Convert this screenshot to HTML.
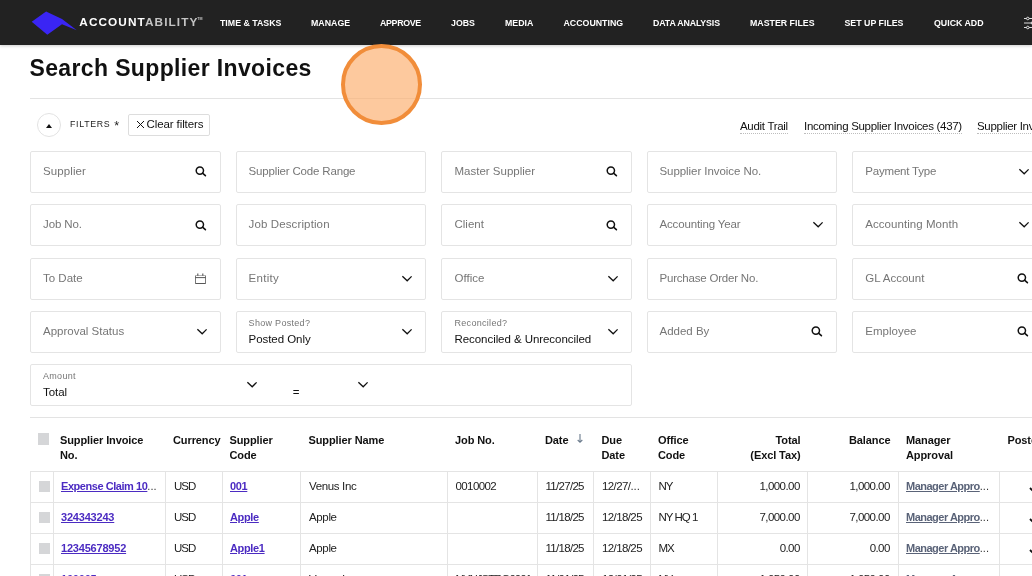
<!DOCTYPE html>
<html>
<head>
<meta charset="utf-8">
<title>Search Supplier Invoices</title>
<style>
*{box-sizing:border-box;margin:0;padding:0}
html,body{width:1032px;height:576px;overflow:hidden;background:#fff}
body{font-family:"Liberation Sans",sans-serif;color:#111;position:relative;font-size:12px}
.abs{position:absolute;white-space:nowrap}
#wrap{position:absolute;left:0;top:0;width:1032px;height:576px;overflow:hidden;will-change:transform}
#nav{position:absolute;left:0;top:0;width:1032px;height:45px;background:#222;box-shadow:0 1px 3px rgba(0,0,0,.2)}
#nav .mi{position:absolute;top:.6px;height:45px;line-height:45px;color:#fff;font-weight:bold;font-size:8.8px;white-space:nowrap}
#brand{position:absolute;left:79.3px;top:.3px;height:45px;line-height:45px;font-weight:bold;font-size:11.8px;letter-spacing:1.08px;color:#fff;white-space:nowrap}
#brand span{color:#c4c4c4}
#tm{position:absolute;left:197.3px;top:17px;font-size:3.6px;line-height:4px;font-weight:bold;color:#c4c4c4}
#title{position:absolute;left:29.5px;top:52px;font-size:23px;letter-spacing:.36px;font-weight:bold;color:#111;line-height:32px;white-space:nowrap}
.hr{position:absolute;left:30px;right:0;height:1px;background:#e3e3e3}
#hl{position:absolute;left:341.2px;top:43.8px;width:81.3px;height:81.3px;border-radius:50%;background:rgba(252,176,112,.68);border:4px solid #f18d3a}
#tog{position:absolute;left:37px;top:113px;width:24px;height:24px;border:1px solid #e2e2e2;border-radius:50%}
#tog:after{content:"";position:absolute;left:7.7px;top:9.5px;border-left:3px solid transparent;border-right:3px solid transparent;border-bottom:4px solid #111}
#flt{position:absolute;left:70px;top:118px;font-size:8.8px;letter-spacing:.7px;word-spacing:1.5px;color:#222;line-height:12px}
#clr{position:absolute;left:128px;top:114px;width:82px;height:22px;border:1px solid #ddd;border-radius:2px;font-size:11.5px;letter-spacing:-.2px;line-height:19.5px;color:#111;white-space:nowrap}
.lnk{position:absolute;top:119px;font-size:11.5px;letter-spacing:-.3px;line-height:14px;color:#111;white-space:nowrap;border-bottom:1px dotted #bdbdbd}
.fb{position:absolute;border:1px solid #e4e4e4;border-radius:2px;background:#fff}
.ph{position:absolute;line-height:14px;font-size:11.5px;letter-spacing:0;color:#767676;white-space:nowrap}
.lb{position:absolute;line-height:10px;font-size:9px;letter-spacing:.3px;color:#767676;white-space:nowrap}
.vl{position:absolute;line-height:14px;font-size:11.5px;letter-spacing:-.06px;color:#111;white-space:nowrap}
svg{position:absolute;overflow:visible}
.th{position:absolute;font-weight:bold;font-size:11px;letter-spacing:-.1px;line-height:15px;color:#111;white-space:nowrap}
.v{position:absolute;width:1px;background:#e4e4e4}
.h{position:absolute;height:1px;background:#e4e4e4;left:30px;right:0}
.td{position:absolute;font-size:11.5px;letter-spacing:-.25px;line-height:14px;color:#222;white-space:nowrap}
.a{color:#4b2bc2;font-weight:bold;text-decoration:underline;font-size:11px;letter-spacing:-.2px}
.m{color:#5a6378;font-weight:bold;text-decoration:underline;font-size:11px;letter-spacing:-.2px}
.el{font-weight:normal;letter-spacing:0;display:inline-block;text-decoration:none;color:#333}
.cb{position:absolute;width:11px;height:11px;background:#d5d6d8}
</style>
</head>
<body><div id="wrap">
<div id="nav">
<svg style="left:0;top:0" width="110" height="45" viewBox="0 0 110 45"><polygon points="31.7,21.8 46.1,11.6 62,19.1 76.8,30.2 62,24.3 47.3,34.7" fill="#3a25f4"/></svg>
<div id="brand">ACCOUNT<span>ABILITY</span></div><div id="tm">TM</div>
<div class="mi" style="left:220px">TIME &amp; TASKS</div>
<div class="mi" style="left:311px">MANAGE</div>
<div class="mi" style="left:380px"><span style="letter-spacing:-.3px">APPROVE</span></div>
<div class="mi" style="left:451px">JOBS</div>
<div class="mi" style="left:505px">MEDIA</div>
<div class="mi" style="left:563.5px">ACCOUNTING</div>
<div class="mi" style="left:653px"><span style="letter-spacing:-.13px">DATA ANALYSIS</span></div>
<div class="mi" style="left:750px">MASTER FILES</div>
<div class="mi" style="left:844.5px">SET UP FILES</div>
<div class="mi" style="left:934px">QUICK ADD</div>
<svg style="left:1024px;top:16px" width="14" height="14" viewBox="0 0 14 14" fill="none" stroke="#ddd" stroke-width="1"><path d="M0 2.5h11M0 7h11M0 11.5h11"/><circle cx="3.8" cy="2.5" r="1.3" fill="#222"/><circle cx="8.5" cy="7" r="1.3" fill="#222"/><circle cx="3.8" cy="11.5" r="1.3" fill="#222"/></svg>
</div>
<div id="title">Search Supplier Invoices</div>
<div class="hr" style="top:98px"></div>
<div id="tog"></div>
<div id="flt">FILTERS</div><div class="abs" style="left:114.3px;top:118.6px;font-size:12.5px;line-height:14px;color:#222">*</div>
<div id="clr"><svg style="left:7.5px;top:5.7px" width="7" height="7" viewBox="0 0 7 7" stroke="#111" stroke-width="1"><path d="M0 0L7 7M7 0L0 7"/></svg><span style="position:absolute;left:17.5px;letter-spacing:-.1px">Clear filters</span></div>
<div class="lnk" style="left:740px">Audit Trail</div>
<div class="lnk" style="left:804px">Incoming Supplier Invoices (437)</div>
<div class="lnk" style="left:977px">Supplier Invoices</div>
<div class="fb" style="left:30px;top:151px;width:191px;height:42px"></div>
<div class="ph" style="left:43px;top:164.2px;letter-spacing:0.1px">Supplier</div>
<svg style="left:193.95px;top:165.3px" width="13" height="13" viewBox="0 0 13 13" fill="none" stroke="#111" stroke-width="1.5"><circle cx="5.85" cy="5.6" r="3.65"/><path d="M8.5 8.2L11.4 10.7" stroke-linecap="round" stroke-width="1.6"/></svg>
<div class="fb" style="left:236px;top:151px;width:190px;height:42px"></div>
<div class="ph" style="left:248.6px;top:164.2px;letter-spacing:-0.17px">Supplier Code Range</div>
<div class="fb" style="left:441px;top:151px;width:191px;height:42px"></div>
<div class="ph" style="left:454.5px;top:164.2px">Master Supplier</div>
<svg style="left:604.55px;top:165.3px" width="13" height="13" viewBox="0 0 13 13" fill="none" stroke="#111" stroke-width="1.5"><circle cx="5.85" cy="5.6" r="3.65"/><path d="M8.5 8.2L11.4 10.7" stroke-linecap="round" stroke-width="1.6"/></svg>
<div class="fb" style="left:647px;top:151px;width:190px;height:42px"></div>
<div class="ph" style="left:659.5px;top:164.2px;letter-spacing:-0.06px">Supplier Invoice No.</div>
<div class="fb" style="left:852px;top:151px;width:191px;height:42px"></div>
<div class="ph" style="left:865.3px;top:164.2px;letter-spacing:-0.2px">Payment Type</div>
<svg style="left:1018.6px;top:168.7px" width="11" height="7" viewBox="0 0 11 7" fill="none" stroke="#111" stroke-width="1.3"><path d="M0.4 0.2L5.2 4.75L9.6 0.4"/></svg>
<div class="fb" style="left:30px;top:204px;width:191px;height:42px"></div>
<div class="ph" style="left:43px;top:217.2px;letter-spacing:-0.1px">Job No.</div>
<svg style="left:193.95px;top:219px" width="13" height="13" viewBox="0 0 13 13" fill="none" stroke="#111" stroke-width="1.5"><circle cx="5.85" cy="5.6" r="3.65"/><path d="M8.5 8.2L11.4 10.7" stroke-linecap="round" stroke-width="1.6"/></svg>
<div class="fb" style="left:236px;top:204px;width:190px;height:42px"></div>
<div class="ph" style="left:248.6px;top:217.2px;letter-spacing:0.12px">Job Description</div>
<div class="fb" style="left:441px;top:204px;width:191px;height:42px"></div>
<div class="ph" style="left:454.5px;top:217.2px">Client</div>
<svg style="left:604.55px;top:219px" width="13" height="13" viewBox="0 0 13 13" fill="none" stroke="#111" stroke-width="1.5"><circle cx="5.85" cy="5.6" r="3.65"/><path d="M8.5 8.2L11.4 10.7" stroke-linecap="round" stroke-width="1.6"/></svg>
<div class="fb" style="left:647px;top:204px;width:190px;height:42px"></div>
<div class="ph" style="left:659.5px;top:217.2px;letter-spacing:-0.15px">Accounting Year</div>
<svg style="left:812.9px;top:222px" width="11" height="7" viewBox="0 0 11 7" fill="none" stroke="#111" stroke-width="1.3"><path d="M0.4 0.2L5.2 4.75L9.6 0.4"/></svg>
<div class="fb" style="left:852px;top:204px;width:191px;height:42px"></div>
<div class="ph" style="left:865.3px;top:217.2px;letter-spacing:0.05px">Accounting Month</div>
<svg style="left:1018.6px;top:222px" width="11" height="7" viewBox="0 0 11 7" fill="none" stroke="#111" stroke-width="1.3"><path d="M0.4 0.2L5.2 4.75L9.6 0.4"/></svg>
<div class="fb" style="left:30px;top:258px;width:191px;height:42px"></div>
<div class="ph" style="left:43px;top:271.2px">To Date</div>
<svg style="left:193.7px;top:272.0px" width="13" height="13" viewBox="0 0 13 13" fill="none" stroke="#666" stroke-width="0.9"><path d="M1.5 3.5v8h10v-8" stroke="#6a6a6a"/><path d="M1.5 3.5h10" stroke="#aaa"/><path d="M1.5 11.5h10" stroke="#555"/><path d="M1.5 5.6h10" stroke="#444"/><path d="M3.8 1.6v2.2M8.8 1.6v2.2" stroke="#555" stroke-width="1.1"/></svg>
<div class="fb" style="left:236px;top:258px;width:190px;height:42px"></div>
<div class="ph" style="left:248.6px;top:271.2px;letter-spacing:0.3px">Entity</div>
<svg style="left:402.0px;top:275.5px" width="11" height="7" viewBox="0 0 11 7" fill="none" stroke="#111" stroke-width="1.3"><path d="M0.4 0.2L5.2 4.75L9.6 0.4"/></svg>
<div class="fb" style="left:441px;top:258px;width:191px;height:42px"></div>
<div class="ph" style="left:454.5px;top:271.2px">Office</div>
<svg style="left:607.9px;top:275.5px" width="11" height="7" viewBox="0 0 11 7" fill="none" stroke="#111" stroke-width="1.3"><path d="M0.4 0.2L5.2 4.75L9.6 0.4"/></svg>
<div class="fb" style="left:647px;top:258px;width:190px;height:42px"></div>
<div class="ph" style="left:659.5px;top:271.2px;letter-spacing:-0.2px">Purchase Order No.</div>
<div class="fb" style="left:852px;top:258px;width:191px;height:42px"></div>
<div class="ph" style="left:865.3px;top:271.2px">GL Account</div>
<svg style="left:1015.65px;top:271.8px" width="13" height="13" viewBox="0 0 13 13" fill="none" stroke="#111" stroke-width="1.5"><circle cx="5.85" cy="5.6" r="3.65"/><path d="M8.5 8.2L11.4 10.7" stroke-linecap="round" stroke-width="1.6"/></svg>
<div class="fb" style="left:30px;top:311px;width:191px;height:42px"></div>
<div class="ph" style="left:43px;top:323.8px">Approval Status</div>
<svg style="left:196.9px;top:328.5px" width="11" height="7" viewBox="0 0 11 7" fill="none" stroke="#111" stroke-width="1.3"><path d="M0.4 0.2L5.2 4.75L9.6 0.4"/></svg>
<div class="fb" style="left:236px;top:311px;width:190px;height:42px"></div>
<div class="lb" style="left:248.6px;top:317.8px">Show Posted?</div>
<div class="vl" style="left:248.6px;top:331.5px">Posted Only</div>
<svg style="left:402.0px;top:328.5px" width="11" height="7" viewBox="0 0 11 7" fill="none" stroke="#111" stroke-width="1.3"><path d="M0.4 0.2L5.2 4.75L9.6 0.4"/></svg>
<div class="fb" style="left:441px;top:311px;width:191px;height:42px"></div>
<div class="lb" style="left:454.5px;top:317.8px">Reconciled?</div>
<div class="vl" style="left:454.5px;top:331.5px">Reconciled &amp; Unreconciled</div>
<svg style="left:607.9px;top:328.5px" width="11" height="7" viewBox="0 0 11 7" fill="none" stroke="#111" stroke-width="1.3"><path d="M0.4 0.2L5.2 4.75L9.6 0.4"/></svg>
<div class="fb" style="left:647px;top:311px;width:190px;height:42px"></div>
<div class="ph" style="left:659.5px;top:323.8px">Added By</div>
<svg style="left:810.05px;top:324.5px" width="13" height="13" viewBox="0 0 13 13" fill="none" stroke="#111" stroke-width="1.5"><circle cx="5.85" cy="5.6" r="3.65"/><path d="M8.5 8.2L11.4 10.7" stroke-linecap="round" stroke-width="1.6"/></svg>
<div class="fb" style="left:852px;top:311px;width:191px;height:42px"></div>
<div class="ph" style="left:865.3px;top:323.8px">Employee</div>
<svg style="left:1015.65px;top:324.5px" width="13" height="13" viewBox="0 0 13 13" fill="none" stroke="#111" stroke-width="1.5"><circle cx="5.85" cy="5.6" r="3.65"/><path d="M8.5 8.2L11.4 10.7" stroke-linecap="round" stroke-width="1.6"/></svg>
<div class="fb" style="left:30px;top:364px;width:602px;height:42px"></div>
<div class="lb" style="left:43px;top:371.3px">Amount</div>
<div class="vl" style="left:43px;top:384.5px">Total</div>
<svg style="left:246.9px;top:382.2px" width="11" height="7" viewBox="0 0 11 7" fill="none" stroke="#111" stroke-width="1.3"><path d="M0.4 0.2L5.2 4.75L9.6 0.4"/></svg>
<div class="vl" style="left:292.8px;top:384.5px">=</div>
<svg style="left:357.9px;top:382.2px" width="11" height="7" viewBox="0 0 11 7" fill="none" stroke="#111" stroke-width="1.3"><path d="M0.4 0.2L5.2 4.75L9.6 0.4"/></svg>
<div class="hr" style="top:417px"></div>
<div class="v" style="left:30.3px;top:471px;height:110px"></div>
<div class="v" style="left:53px;top:471px;height:110px"></div>
<div class="v" style="left:165.3px;top:471px;height:110px"></div>
<div class="v" style="left:222px;top:471px;height:110px"></div>
<div class="v" style="left:300px;top:471px;height:110px"></div>
<div class="v" style="left:447px;top:471px;height:110px"></div>
<div class="v" style="left:537px;top:471px;height:110px"></div>
<div class="v" style="left:593px;top:471px;height:110px"></div>
<div class="v" style="left:650px;top:471px;height:110px"></div>
<div class="v" style="left:717px;top:471px;height:110px"></div>
<div class="v" style="left:807px;top:471px;height:110px"></div>
<div class="v" style="left:898px;top:471px;height:110px"></div>
<div class="v" style="left:999px;top:471px;height:110px"></div>
<div class="h" style="top:471px"></div>
<div class="h" style="top:502px"></div>
<div class="h" style="top:533px"></div>
<div class="h" style="top:564px"></div>
<div class="cb" style="left:38px;top:433px;height:12px"></div>
<div class="th" style="left:60px;top:432.5px">Supplier Invoice</div>
<div class="th" style="left:60px;top:447.5px">No.</div>
<div class="th" style="left:173px;top:432.5px">Currency</div>
<div class="th" style="left:229.5px;top:432.5px">Supplier</div>
<div class="th" style="left:229.5px;top:447.5px">Code</div>
<div class="th" style="left:308.5px;top:432.5px">Supplier Name</div>
<div class="th" style="left:455px;top:432.5px">Job No.</div>
<div class="th" style="left:545px;top:432.5px">Date</div>
<div class="th" style="left:601.5px;top:432.5px">Due</div>
<div class="th" style="left:601.5px;top:447.5px">Date</div>
<div class="th" style="left:658px;top:432.5px">Office</div>
<div class="th" style="left:658px;top:447.5px">Code</div>
<div class="th" style="right:231.5px;top:432.5px">Total</div>
<div class="th" style="right:231.5px;top:447.5px">(Excl Tax)</div>
<div class="th" style="right:141.5px;top:432.5px">Balance</div>
<div class="th" style="left:906px;top:432.5px">Manager</div>
<div class="th" style="left:906px;top:447.5px">Approval</div>
<div class="th" style="left:1007.5px;top:432.5px">Posted</div>
<svg style="left:576.8px;top:434px" width="6" height="9" viewBox="0 0 6 9" fill="none" stroke="#6a7a8c" stroke-width="1.1"><path d="M3 0v8.3M0.7 6L3 8.3L5.3 6"/></svg>
<div class="cb" style="left:39px;top:481px"></div>
<div class="td a" style="left:61px;top:479px;letter-spacing:-.45px">Expense Claim 10<span class="el">...</span></div>
<div class="td " style="left:174px;top:479px;letter-spacing:-1px">USD</div>
<div class="td a" style="left:230px;top:479px;letter-spacing:-.35px">001</div>
<div class="td " style="left:309px;top:479px;letter-spacing:-.35px">Venus Inc</div>
<div class="td " style="left:455.5px;top:479px;letter-spacing:-.6px">0010002</div>
<div class="td " style="left:545.5px;top:479px;letter-spacing:-.7px">11/27/25</div>
<div class="td " style="left:602px;top:479px;letter-spacing:-.6px">12/27/<span class="el">...</span></div>
<div class="td " style="left:658.5px;top:479px;letter-spacing:-1.1px">NY</div>
<div class="td " style="right:232.20000000000005px;top:479px;letter-spacing:-.55px">1,000.00</div>
<div class="td " style="right:142.20000000000005px;top:479px;letter-spacing:-.55px">1,000.00</div>
<div class="td m" style="left:906px;top:479px;letter-spacing:-.5px">Manager Appro<span class="el">...</span></div>
<svg style="left:1029.3px;top:484.3px" width="10" height="8" viewBox="0 0 10 8" fill="none" stroke="#111" stroke-width="1.9"><path d="M1 4L4 7L9 1"/></svg>
<div class="cb" style="left:39px;top:512px"></div>
<div class="td a" style="left:61px;top:510px;letter-spacing:-.2px">324343243</div>
<div class="td " style="left:174px;top:510px;letter-spacing:-1px">USD</div>
<div class="td a" style="left:230px;top:510px;letter-spacing:-.35px">Apple</div>
<div class="td " style="left:309px;top:510px;letter-spacing:-.35px">Apple</div>
<div class="td " style="left:455.5px;top:510px;letter-spacing:-.6px"></div>
<div class="td " style="left:545.5px;top:510px;letter-spacing:-.7px">11/18/25</div>
<div class="td " style="left:602px;top:510px;letter-spacing:-.6px">12/18/25</div>
<div class="td " style="left:658.5px;top:510px;letter-spacing:-1.0px">NY HQ 1</div>
<div class="td " style="right:232.20000000000005px;top:510px;letter-spacing:-.55px">7,000.00</div>
<div class="td " style="right:142.20000000000005px;top:510px;letter-spacing:-.55px">7,000.00</div>
<div class="td m" style="left:906px;top:510px;letter-spacing:-.5px">Manager Appro<span class="el">...</span></div>
<svg style="left:1029.3px;top:515.3px" width="10" height="8" viewBox="0 0 10 8" fill="none" stroke="#111" stroke-width="1.9"><path d="M1 4L4 7L9 1"/></svg>
<div class="cb" style="left:39px;top:543px"></div>
<div class="td a" style="left:61px;top:541px;letter-spacing:-.2px">12345678952</div>
<div class="td " style="left:174px;top:541px;letter-spacing:-1px">USD</div>
<div class="td a" style="left:230px;top:541px;letter-spacing:-.35px">Apple1</div>
<div class="td " style="left:309px;top:541px;letter-spacing:-.35px">Apple</div>
<div class="td " style="left:455.5px;top:541px;letter-spacing:-.6px"></div>
<div class="td " style="left:545.5px;top:541px;letter-spacing:-.7px">11/18/25</div>
<div class="td " style="left:602px;top:541px;letter-spacing:-.6px">12/18/25</div>
<div class="td " style="left:658.5px;top:541px;letter-spacing:-1.0px">MX</div>
<div class="td " style="right:232.20000000000005px;top:541px;letter-spacing:-.55px">0.00</div>
<div class="td " style="right:142.20000000000005px;top:541px;letter-spacing:-.55px">0.00</div>
<div class="td m" style="left:906px;top:541px;letter-spacing:-.5px">Manager Appro<span class="el">...</span></div>
<svg style="left:1029.3px;top:546.3px" width="10" height="8" viewBox="0 0 10 8" fill="none" stroke="#111" stroke-width="1.9"><path d="M1 4L4 7L9 1"/></svg>
<div class="cb" style="left:39px;top:574px"></div>
<div class="td a" style="left:61px;top:572px;letter-spacing:-.2px">100005</div>
<div class="td " style="left:174px;top:572px;letter-spacing:-1px">USD</div>
<div class="td a" style="left:230px;top:572px;letter-spacing:-.35px">001</div>
<div class="td " style="left:309px;top:572px;letter-spacing:-.35px">Venus Inc</div>
<div class="td " style="left:455.5px;top:572px;letter-spacing:-1.0px">NYNJSTRO0001</div>
<div class="td " style="left:545.5px;top:572px;letter-spacing:-.7px">11/01/25</div>
<div class="td " style="left:602px;top:572px;letter-spacing:-.6px">12/01/25</div>
<div class="td " style="left:658.5px;top:572px;letter-spacing:-1.1px">NY</div>
<div class="td " style="right:232.20000000000005px;top:572px;letter-spacing:-.55px">1,050.00</div>
<div class="td " style="right:142.20000000000005px;top:572px;letter-spacing:-.55px">1,050.00</div>
<div class="td m" style="left:906px;top:572px;letter-spacing:-.5px">Manager Appro<span class="el">...</span></div>
<svg style="left:1029.3px;top:577.3px" width="10" height="8" viewBox="0 0 10 8" fill="none" stroke="#111" stroke-width="1.9"><path d="M1 4L4 7L9 1"/></svg>
<div id="hl"></div>
</div></body>
</html>
